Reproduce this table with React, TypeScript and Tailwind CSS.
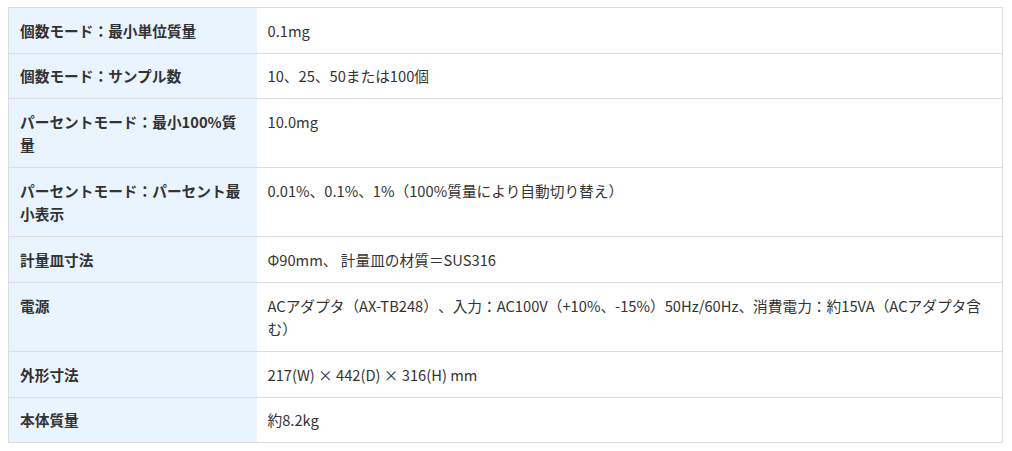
const rows: [string, string][] = [
  ['個数モード：最小単位質量', '0.1mg'],
  ['個数モード：サンプル数', '10、25、50または100個'],
  ['パーセントモード：最小100%質量', '10.0mg'],
  ['パーセントモード：パーセント最小表示', '0.01%、0.1%、1%（100%質量により自動切り替え）'],
  ['計量皿寸法', 'Φ90mm、 計量皿の材質＝SUS316'],
  ['電源', 'ACアダプタ（AX-TB248）、入力：AC100V（+10%、-15%）50Hz/60Hz、消費電力：約15VA（ACアダプタ含む）'],
  ['外形寸法', '217(W) × 442(D) × 316(H) mm'],
  ['本体質量', '約8.2kg'],
]

export default function App() {
  return (
    <div className="bg-white w-[1012px] h-[451px] pt-[7px] pl-[8px] font-['Noto_Sans_CJK_JP','Noto_Sans',sans-serif] text-[14.7px] leading-[1.6] text-[#333] [text-spacing-trim:space-all]">
      <table className="w-[995px] border-collapse border border-[#dddddd]">
        <tbody>
          {rows.map(([k, v]) => (
            <tr key={k} className="border-b border-[#dddddd]">
              <th className="w-[248px] bg-[#eaf4fe] text-left align-top font-bold pl-[11px] pr-[12px] py-[10.55px]">
                {k}
              </th>
              <td className="align-top pl-[11px] pr-[12px] py-[10.55px] font-normal">{v}</td>
            </tr>
          ))}
        </tbody>
      </table>
    </div>
  )
}
